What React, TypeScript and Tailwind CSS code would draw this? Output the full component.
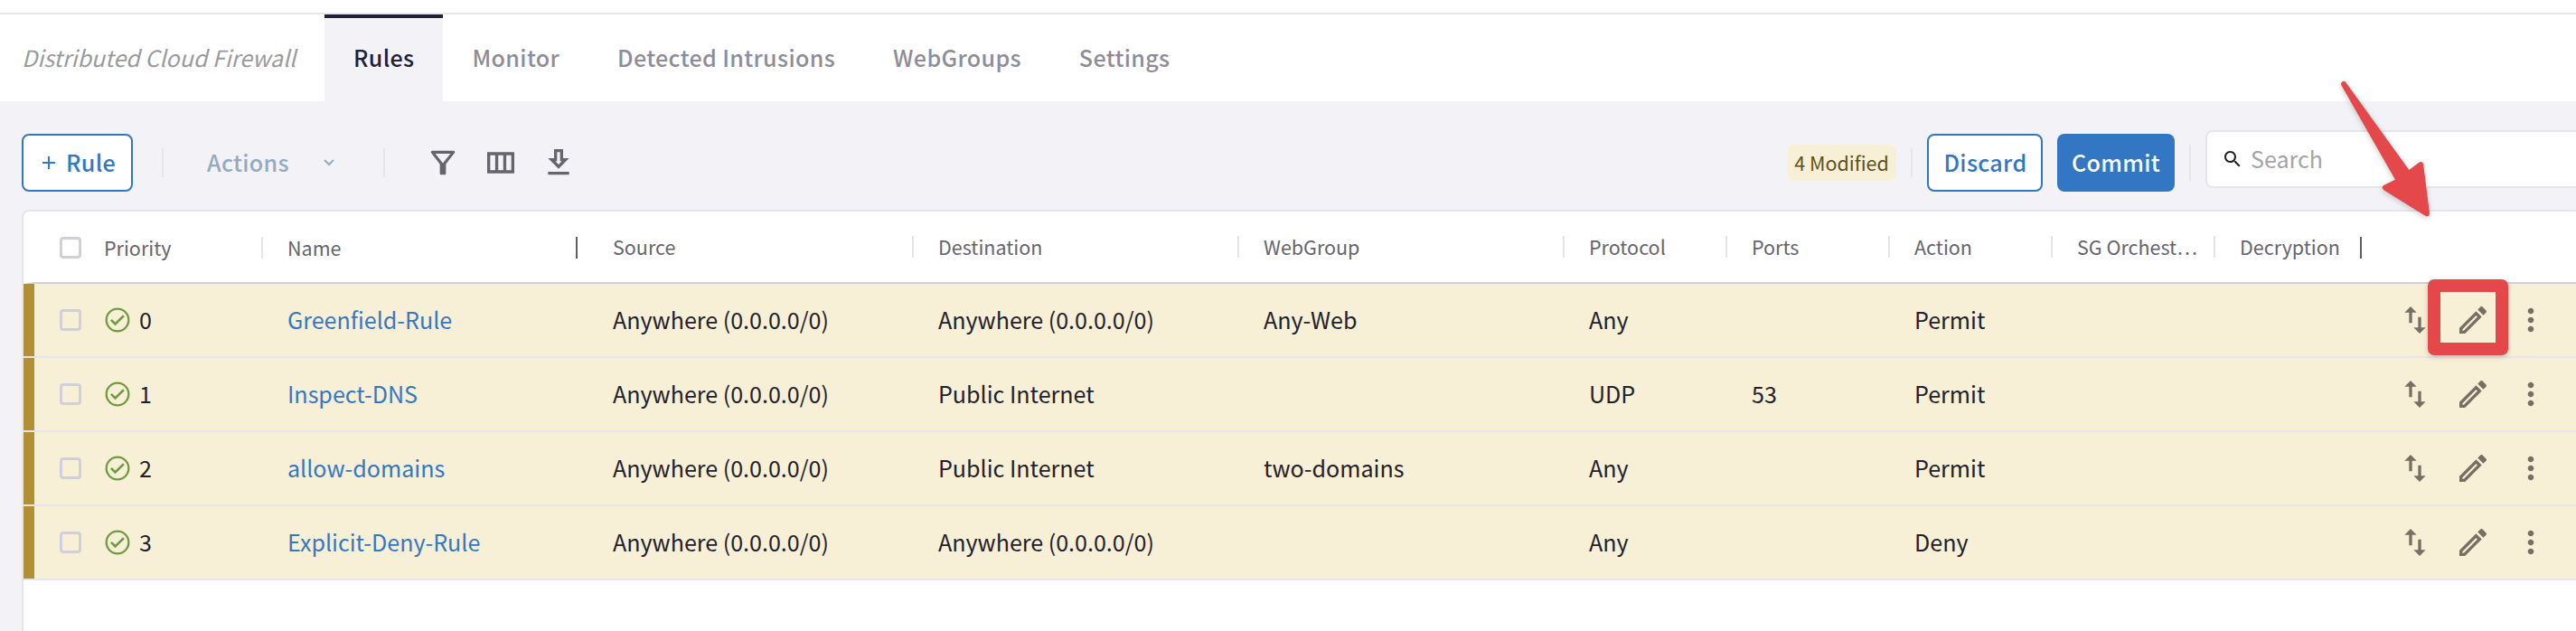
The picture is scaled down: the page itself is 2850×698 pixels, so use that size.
import type { ReactNode } from 'react';

const ICONS = {
  filter:
    'M7 6h10l-5.01 6.3L7 6zm-2.75-.39C6.27 8.2 10 13 10 13v6c0 .55.45 1 1 1h2c.55 0 1-.45 1-1v-6s3.72-4.8 5.74-7.39A.998.998 0 0 0 18.95 4H5.04c-.83 0-1.3.95-.79 1.61z',
  columns: 'M3 5v14h18V5H3zm5.33 12H5V7h3.33v10zm5.34 0h-3.33V7h3.33v10zM19 17h-3.33V7H19v10z',
  download: 'M19 9h-4V3H9v6H5l7 7 7-7zm-8 2V5h2v6h1.17L12 13.17 9.83 11H11zm-6 7h14v2H5z',
  reorder: 'M16 17.01V10h-2v7.01h-3L15 21l4-3.99h-3zM9 3L5 6.99h3V14h2V6.99h3L9 3z',
  edit: 'M14.06 9.02l.92.92L5.92 19H5v-.92l9.06-9.06M17.66 3c-.25 0-.51.1-.7.29l-1.83 1.83 3.75 3.75 1.83-1.83c.39-.39.39-1.02 0-1.41l-2.34-2.34c-.2-.2-.45-.29-.71-.29zm-3.6 3.19L3 17.25V21h3.75L17.81 9.94l-3.75-3.75z',
  more: 'M12 8c1.1 0 2-.9 2-2s-.9-2-2-2-2 .9-2 2 .9 2 2 2zm0 2c-1.1 0-2 .9-2 2s.9 2 2 2 2-.9 2-2-.9-2-2-2zm0 6c-1.1 0-2 .9-2 2s.9 2 2 2 2-.9 2-2-.9-2-2-2z',
  search:
    'M15.5 14h-.79l-.28-.27C15.41 12.59 16 11.11 16 9.5 16 5.91 13.09 3 9.5 3S3 5.91 3 9.5 5.91 16 9.5 16c1.61 0 3.09-.59 4.23-1.57l.27.28v.79l5 4.99L20.49 19l-4.99-5zm-6 0C7.01 14 5 11.99 5 9.5S7.01 5 9.5 5 14 7.01 14 9.5 11.99 14 9.5 14z',
};

function Icon({ name, className = 'size-10' }: { name: keyof typeof ICONS; className?: string }) {
  return (
    <svg viewBox="0 0 24 24" fill="currentColor" className={`block shrink-0 ${className}`}>
      <path d={ICONS[name]} />
    </svg>
  );
}

const TABS = ['Rules', 'Monitor', 'Detected Intrusions', 'WebGroups', 'Settings'];

const GRID =
  'grid grid-cols-[78px_174px_360px_360px_360px_360px_180px_180px_180px_180px_162px_1fr]';

const HEADERS = ['Source', 'Destination', 'WebGroup', 'Protocol', 'Ports', 'Action', 'SG Orchest…'];

type Rule = {
  name: string;
  source: string;
  destination: string;
  webGroup?: string;
  protocol: string;
  ports?: string;
  action: string;
};

const RULES: Rule[] = [
  { name: 'Greenfield-Rule', source: 'Anywhere (0.0.0.0/0)', destination: 'Anywhere (0.0.0.0/0)', webGroup: 'Any-Web', protocol: 'Any', action: 'Permit' },
  { name: 'Inspect-DNS', source: 'Anywhere (0.0.0.0/0)', destination: 'Public Internet', protocol: 'UDP', ports: '53', action: 'Permit' },
  { name: 'allow-domains', source: 'Anywhere (0.0.0.0/0)', destination: 'Public Internet', webGroup: 'two-domains', protocol: 'Any', action: 'Permit' },
  { name: 'Explicit-Deny-Rule', source: 'Anywhere (0.0.0.0/0)', destination: 'Anywhere (0.0.0.0/0)', protocol: 'Any', action: 'Deny' },
];

function Checkbox() {
  return <span className="block size-6 shrink-0 rounded-[4px] border-[3px] border-[#d1cfda]" />;
}

function HeaderCell({ children }: { children?: ReactNode }) {
  return (
    <div className="-mr-px flex h-6 items-center justify-between pl-7">
      <span className="whitespace-nowrap">{children}</span>
      <span className="h-6 w-0.5 bg-[#e6e5ea]" />
    </div>
  );
}

function StatusOk() {
  return (
    <svg viewBox="0 0 32 32" className="block size-8 shrink-0" fill="none" stroke="#6e9b3f">
      <circle cx="16" cy="16" r="12.3" strokeWidth="2.3" />
      <path d="M8.9 15.8l4.6 4.6 9.4-9.1" strokeWidth="2.6" />
    </svg>
  );
}

function Cell({ children }: { children?: ReactNode }) {
  return <div className="pb-0.5 pl-7 whitespace-nowrap">{children}</div>;
}

function Row({ rule, index }: { rule: Rule; index: number }) {
  return (
    <div className="border-b-2 border-[#e6e5ea]">
      <div className={`${GRID} h-20 items-center border-l-12 border-[#b19035] bg-[#f8f0d6] text-[25.07px] leading-[78px] text-[#22212b]`}>
        <div className="flex justify-start pl-7">
          <Checkbox />
        </div>
        <div className="-ml-0.5 flex items-center gap-2">
          <StatusOk />
          <span className="pb-0.5">{index}</span>
        </div>
        <div className="pb-0.5 pl-7 text-[#3478c4]">{rule.name}</div>
        <Cell>{rule.source}</Cell>
        <Cell>{rule.destination}</Cell>
        <Cell>{rule.webGroup}</Cell>
        <Cell>{rule.protocol}</Cell>
        <Cell>{rule.ports}</Cell>
        <Cell>{rule.action}</Cell>
        <Cell />
        <Cell />
        <div className="flex gap-6 pl-10 text-[#757063]">
          <Icon name="reorder" />
          <Icon name="edit" />
          <Icon name="more" />
        </div>
      </div>
    </div>
  );
}

export default function App() {
  return (
    <div className="relative flex h-[698px] w-full flex-col overflow-hidden bg-[#f3f2f7] font-['Noto_Sans_CJK_JP','Noto_Sans',sans-serif]">
      <div className="h-4 shrink-0 border-b-2 border-[#e6e5ea] bg-white" />

      <nav className="flex h-24 shrink-0 bg-white text-[25.07px] font-medium tracking-[0.35px] text-[#8e8d97]">
        <div className="flex w-[359px] items-center pl-6 font-normal tracking-normal text-[#9a9a9c] italic">
          Distributed Cloud Firewall
        </div>
        {TABS.map((tab, i) => (
          <div
            key={tab}
            className={
              i === 0
                ? 'flex items-center border-t-4 border-[#231f36] bg-[#f3f2f7] px-8 pb-1 text-[#231f36]'
                : 'flex items-center px-8'
            }
          >
            {tab}
          </div>
        ))}
      </nav>

      <div className="flex h-[120px] w-[2856px] shrink-0 items-start pt-9 pl-6 text-[25.07px]">
        <button className="flex h-16 w-[123px] items-center rounded-lg border-2 border-[#3376c3] bg-white pl-[21px] font-medium tracking-[0.35px] text-[#3376c3]">
          <svg viewBox="0 0 14 14" className="mr-3 size-3.5" stroke="currentColor" strokeWidth="2">
            <path d="M7 0v14M0 7h14" />
          </svg>
          Rule
        </button>
        <span className="mt-4 ml-8 h-8 w-0.5 bg-[#e6e5ea]" />
        <button className="ml-12 flex h-16 items-center font-medium tracking-[0.35px] text-[#92abc2]">
          Actions
          <svg viewBox="0 0 12 8" className="ml-[38px] h-2 w-3" fill="none" stroke="currentColor" strokeWidth="2">
            <path d="M1 1l5 5 5-5" />
          </svg>
        </button>
        <span className="mt-4 ml-[54px] h-8 w-0.5 bg-[#e6e5ea]" />
        <div className="ml-11 flex h-16 items-center gap-6 text-[#66646d]">
          <Icon name="filter" />
          <Icon name="columns" />
          <Icon name="download" />
        </div>

        <div className="ml-auto flex items-start">
          <span className="mt-3 flex h-10 w-[121px] items-center justify-center rounded-lg bg-[#f8f0d6] text-[21.5px] text-[#5c501a]">
            4 Modified
          </span>
          <span className="mt-4 ml-4 h-8 w-0.5 bg-[#e6e5ea]" />
          <button className="ml-4 flex h-16 w-32 items-center justify-center rounded-lg border-2 border-[#3376c3] bg-white pl-px font-medium tracking-[0.35px] text-[#3376c3]">
            Discard
          </button>
          <button className="ml-4 flex h-16 w-[130px] items-center justify-center rounded-lg bg-[#3376c3] font-medium tracking-[0.35px] text-white">
            Commit
          </button>
          <span className="mt-3 ml-4 h-10 w-0.5 bg-[#e6e5ea]" />
          <div className="-mt-1 ml-4 flex h-16 w-[416px] items-center rounded-lg border-2 border-[#e6e5ea] bg-white pl-4 text-[#a4a4a6]">
            <Icon name="search" className="size-6 text-[#1f1d2b]" />
            <span className="ml-2">Search</span>
          </div>
        </div>
      </div>

      <div className="ml-6 h-[480px] w-[2832px] shrink-0 self-start rounded-t-lg border-2 border-[#e6e5ea] bg-white">
        <div className={`${GRID} h-20 items-center border-b-2 border-l-12 border-b-[#d1cfda] border-l-transparent text-[21.5px] text-[#65646d]`}>
          <div className="mt-0.5 pl-7">
            <Checkbox />
          </div>
          <div className="mt-0.5 -mr-px flex h-6 items-center justify-between">
            <span className="-ml-px">Priority</span>
            <span className="h-6 w-0.5 bg-[#e6e5ea]" />
          </div>
          <div className="mt-0.5 flex h-6 items-center justify-between pr-[11px] pl-7">
            <span>Name</span>
            <span className="h-6 w-0.5 bg-[#5f5e67]" />
          </div>
          {HEADERS.map((label) => (
            <HeaderCell key={label}>{label}</HeaderCell>
          ))}
          <div className="-mr-px flex h-6 items-center justify-between pl-7">
            <span>Decryption</span>
            <span className="mt-0.5 h-6 w-0.5 shrink-0 bg-[#5f5e67]" />
          </div>
          <div />
        </div>
        {RULES.map((rule, i) => (
          <Row key={rule.name} rule={rule} index={i} />
        ))}
      </div>

      <div className="absolute top-[309px] left-[2686px] h-[84px] w-[89px] rounded-[7px] border-14 border-[#e5484b] shadow-[0_2px_6px_rgba(0,0,0,0.18)]" />
      <svg viewBox="0 0 330 480" className="absolute top-[80px] left-[2580px] h-40 w-[110px] overflow-visible drop-shadow-[0_2px_3px_rgba(0,0,0,0.2)]" fill="#e5484b">
        <path d="M31 43Q28 34 36 30Q43 28 48 36L256 324L289 299Q300 293 303 304L324 467Q324 480 311 477L172 391Q163 382 171 375L210 356Z" />
      </svg>
    </div>
  );
}
